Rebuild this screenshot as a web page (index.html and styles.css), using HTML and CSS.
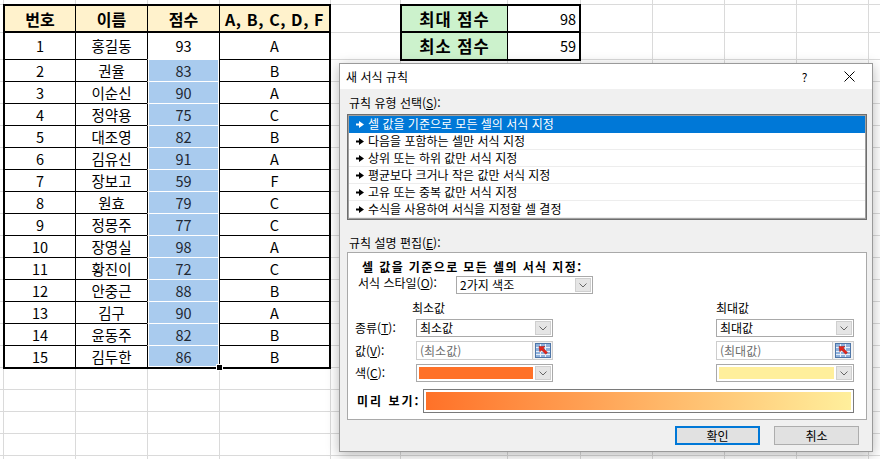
FILE: index.html
```html
<!DOCTYPE html>
<html lang="ko">
<head>
<meta charset="utf-8">
<title>새 서식 규칙</title>
<link rel="stylesheet" href="styles.css">
</head>
<body>
<div class="sheet">
  <div class="grades">
    <div class="c h">번호</div><div class="c h">이름</div><div class="c h">점수</div><div class="c h abc">A, B, C, D, F</div>
    <div class="c">1</div><div class="c">홍길동</div><div class="c sc active">93</div><div class="c">A</div>
    <div class="c">2</div><div class="c">권율</div><div class="c sc">83</div><div class="c">B</div>
    <div class="c">3</div><div class="c">이순신</div><div class="c sc">90</div><div class="c">A</div>
    <div class="c">4</div><div class="c">정약용</div><div class="c sc">75</div><div class="c">C</div>
    <div class="c">5</div><div class="c">대조영</div><div class="c sc">82</div><div class="c">B</div>
    <div class="c">6</div><div class="c">김유신</div><div class="c sc">91</div><div class="c">A</div>
    <div class="c">7</div><div class="c">장보고</div><div class="c sc">59</div><div class="c">F</div>
    <div class="c">8</div><div class="c">원효</div><div class="c sc">79</div><div class="c">C</div>
    <div class="c">9</div><div class="c">정몽주</div><div class="c sc">77</div><div class="c">C</div>
    <div class="c">10</div><div class="c">장영실</div><div class="c sc">98</div><div class="c">A</div>
    <div class="c">11</div><div class="c">황진이</div><div class="c sc">72</div><div class="c">C</div>
    <div class="c">12</div><div class="c">안중근</div><div class="c sc">88</div><div class="c">B</div>
    <div class="c">13</div><div class="c">김구</div><div class="c sc">90</div><div class="c">A</div>
    <div class="c">14</div><div class="c">윤동주</div><div class="c sc">82</div><div class="c">B</div>
    <div class="c">15</div><div class="c">김두한</div><div class="c sc end">86<span class="handle"></span></div><div class="c">B</div>
  </div>

  <div class="summary">
    <div class="s-label top">최대 점수</div><div class="s-val top">98</div>
    <div class="s-label">최소 점수</div><div class="s-val">59</div>
  </div>

  <div class="dialog">
    <div class="titlebar">
      <span class="title">새 서식 규칙</span>
      <span class="tb-btn">?</span>
      <span class="tb-btn"><svg width="11" height="11" viewBox="0 0 11 11"><path d="M0.5 0.5L10.5 10.5M10.5 0.5L0.5 10.5" stroke="#000" stroke-width="1"/></svg></span>
    </div>
    <div class="dlg-body">
      <div class="lbl l1">규칙 유형 선택(<u>S</u>):</div>
      <ul class="rules">
        <li class="sel"><svg class="tri" width="8" height="7" viewBox="0 0 8 7"><path d="M0 2.5H3V0L8 3.5L3 7V4.5H0Z" fill="currentColor"/></svg>셀 값을 기준으로 모든 셀의 서식 지정</li>
        <li><svg class="tri" width="8" height="7" viewBox="0 0 8 7"><path d="M0 2.5H3V0L8 3.5L3 7V4.5H0Z" fill="currentColor"/></svg>다음을 포함하는 셀만 서식 지정</li>
        <li><svg class="tri" width="8" height="7" viewBox="0 0 8 7"><path d="M0 2.5H3V0L8 3.5L3 7V4.5H0Z" fill="currentColor"/></svg>상위 또는 하위 값만 서식 지정</li>
        <li><svg class="tri" width="8" height="7" viewBox="0 0 8 7"><path d="M0 2.5H3V0L8 3.5L3 7V4.5H0Z" fill="currentColor"/></svg>평균보다 크거나 작은 값만 서식 지정</li>
        <li><svg class="tri" width="8" height="7" viewBox="0 0 8 7"><path d="M0 2.5H3V0L8 3.5L3 7V4.5H0Z" fill="currentColor"/></svg>고유 또는 중복 값만 서식 지정</li>
        <li><svg class="tri" width="8" height="7" viewBox="0 0 8 7"><path d="M0 2.5H3V0L8 3.5L3 7V4.5H0Z" fill="currentColor"/></svg>수식을 사용하여 서식을 지정할 셀 결정</li>
      </ul>
      <div class="lbl l2">규칙 설명 편집(<u>E</u>):</div>
      <div class="edit">
        <div class="edit-title">셀 값을 기준으로 모든 셀의 서식 지정:</div>
        <div class="style-row">
          <span class="style-lbl">서식 스타일(<u>O</u>):</span>
          <div class="combo style-combo"><span class="combo-text">2가지 색조</span><span class="arrow"><svg width="8" height="5" viewBox="0 0 8 5"><path d="M0.5 0.5L4 4L7.5 0.5" stroke="#666" fill="none"/></svg></span></div>
        </div>
        <div class="params">
          <span></span><span class="col-h min-h">최소값</span><span></span><span class="col-h">최대값</span>

          <span class="p-lbl">종류(<u>T</u>):</span>
          <div class="combo"><span class="combo-text">최소값</span><span class="arrow"><svg width="8" height="5" viewBox="0 0 8 5"><path d="M0.5 0.5L4 4L7.5 0.5" stroke="#666" fill="none"/></svg></span></div>
          <span></span>
          <div class="combo"><span class="combo-text">최대값</span><span class="arrow"><svg width="8" height="5" viewBox="0 0 8 5"><path d="M0.5 0.5L4 4L7.5 0.5" stroke="#666" fill="none"/></svg></span></div>

          <span class="p-lbl">값(<u>V</u>):</span>
          <div class="valbox"><span class="valinput">(최소값)</span><span class="pick"><svg width="16" height="15" viewBox="0 0 16 15"><rect x="0.5" y="0.5" width="15" height="14" fill="#8fb1dc" stroke="#4f76a8"/><path d="M1 4.5H15M1 8.5H15M1 11.5H15M5.5 1V14M10.5 1V14" stroke="#e8f0fa" stroke-width="1"/><path d="M4 3.5L10 3.5L8.3 5.2L12.5 9.4L10.7 11.2L6.5 7L4.8 8.7Z" fill="#e2231a" stroke="#a5140e" stroke-width="0.5"/></svg></span></div>
          <span></span>
          <div class="valbox"><span class="valinput">(최대값)</span><span class="pick"><svg width="16" height="15" viewBox="0 0 16 15"><rect x="0.5" y="0.5" width="15" height="14" fill="#8fb1dc" stroke="#4f76a8"/><path d="M1 4.5H15M1 8.5H15M1 11.5H15M5.5 1V14M10.5 1V14" stroke="#e8f0fa" stroke-width="1"/><path d="M4 3.5L10 3.5L8.3 5.2L12.5 9.4L10.7 11.2L6.5 7L4.8 8.7Z" fill="#e2231a" stroke="#a5140e" stroke-width="0.5"/></svg></span></div>

          <span class="p-lbl">색(<u>C</u>):</span>
          <div class="combo"><span class="swatch orange"></span><span class="arrow"><svg width="8" height="5" viewBox="0 0 8 5"><path d="M0.5 0.5L4 4L7.5 0.5" stroke="#666" fill="none"/></svg></span></div>
          <span></span>
          <div class="combo"><span class="swatch yellow"></span><span class="arrow"><svg width="8" height="5" viewBox="0 0 8 5"><path d="M0.5 0.5L4 4L7.5 0.5" stroke="#666" fill="none"/></svg></span></div>
        </div>
        <div class="preview-row">
          <span class="pv-lbl">미리 보기:</span>
          <div class="pv-box"><div class="pv-grad"></div></div>
        </div>
      </div>
      <div class="btns">
        <button class="btn ok">확인</button>
        <button class="btn">취소</button>
      </div>
    </div>
  </div>
</div>
</body>
</html>
```
FILE: styles.css
```css
* { box-sizing: border-box; }
html, body { margin: 0; padding: 0; }
body {
  font-family: "Noto Sans CJK KR", "Noto Sans", sans-serif;
  color: #000;
  background: #fff;
}

.sheet {
  --g: #dadada;
  position: relative;
  width: 880px;
  height: 459px;
  overflow: hidden;
  display: flex;
  align-items: flex-start;
  padding: 4px 0 0 3px;
  background:
    linear-gradient(var(--g), var(--g)) 3px 0 / 1px 100% no-repeat,
    linear-gradient(var(--g), var(--g)) 75px 0 / 1px 100% no-repeat,
    linear-gradient(var(--g), var(--g)) 147px 0 / 1px 100% no-repeat,
    linear-gradient(var(--g), var(--g)) 219px 0 / 1px 100% no-repeat,
    linear-gradient(var(--g), var(--g)) 330px 0 / 1px 100% no-repeat,
    linear-gradient(var(--g), var(--g)) 400px 0 / 1px 100% no-repeat,
    linear-gradient(var(--g), var(--g)) 507px 0 / 1px 100% no-repeat,
    linear-gradient(var(--g), var(--g)) 580px 0 / 1px 100% no-repeat,
    linear-gradient(var(--g), var(--g)) 652px 0 / 1px 100% no-repeat,
    linear-gradient(var(--g), var(--g)) 724px 0 / 1px 100% no-repeat,
    linear-gradient(var(--g), var(--g)) 796px 0 / 1px 100% no-repeat,
    linear-gradient(var(--g), var(--g)) 868px 0 / 1px 100% no-repeat,
    linear-gradient(var(--g), var(--g)) 0 4px / 100% 1px no-repeat,
    linear-gradient(var(--g), var(--g)) 0 32px / 100% 1px no-repeat,
    linear-gradient(var(--g), var(--g)) 0 59px / 100% 1px no-repeat,
    repeating-linear-gradient(to bottom, var(--g) 0 1px, transparent 1px 22px) 0 81px / 100% 400px no-repeat,
    #fff;
}

/* grade table */
.grades {
  display: grid;
  grid-template-columns: 70px 72px 72px 110px;
  grid-template-rows: 27px 27px repeat(13, 22px) 21px;
  border: 2px solid #000;
  background: #fff;
  font-size: 14.5px;
}
.c {
  display: flex;
  align-items: center;
  justify-content: center;
  padding-top: 1px;
  border-left: 1px solid #000;
  border-bottom: 1px solid #000;
  line-height: 1;
  white-space: nowrap;
}
.grades > .c:nth-child(4n+1) { border-left: 0; }
.grades > .c:nth-last-child(-n+4) { border-bottom: 0; }
.h {
  background: #fff2cc;
  font-weight: 700;
  font-size: 16px;
  border-bottom-width: 2px;
}
.abc { letter-spacing: 0.6px; }

.sc {
  background: #a9cbee;
  color: #1f2833;
  border-bottom-color: #fff;
  box-shadow: inset 1px 0 #fff, inset -1px 0 #fff;
}
.sc.active { background: #fff; color: #000; }
.sc.end {
  position: relative;
  box-shadow: inset 1px 0 #fff, inset -1px 0 #fff, inset 0 -1px #fff;
}
.handle {
  position: absolute;
  right: -4px;
  bottom: -4px;
  width: 7px;
  height: 7px;
  background: #000;
  border: 1px solid #fff;
}

/* summary box */
.summary {
  display: grid;
  grid-template-columns: 105px 72px;
  grid-template-rows: 27px 26px;
  border: 2px solid #000;
  margin-left: 69px;
  background: #fff;
}
.s-label {
  display: flex;
  align-items: center;
  justify-content: center;
  padding-top: 1px;
  background: #ccf2cc;
  font-weight: 700;
  font-size: 16.5px;
  letter-spacing: 1px;
  line-height: 1;
}
.s-val {
  display: flex;
  align-items: center;
  justify-content: flex-end;
  padding: 1px 3px 0 0;
  border-left: 1px solid #000;
  font-size: 14.5px;
  line-height: 1;
}
.top { border-bottom: 2px solid #000; }

/* dialog */
.dialog {
  position: absolute;
  left: 339px;
  top: 63px;
  width: 534px;
  border: 1px solid #9a9a9a;
  background: #f0f0f0;
  box-shadow: 0 3px 12px rgba(0, 0, 0, 0.28);
  font-size: 12px;
  line-height: 16px;
}
.titlebar {
  display: flex;
  align-items: center;
  height: 25px;
  background: #fff;
}
.title { flex: 1; padding-left: 6px; }
.tb-btn {
  width: 45px;
  height: 25px;
  display: flex;
  align-items: center;
  justify-content: center;
  font-size: 12px;
}
.dlg-body {
  display: flex;
  flex-direction: column;
  padding: 0 5px 6px 7px;
}
.lbl { padding-left: 2px; height: 16px; }
.l1 { margin-top: 6px; }
.l2 { margin-top: 15px; }
u { text-decoration-thickness: 1px; text-underline-offset: 1px; }

.rules {
  list-style: none;
  margin: 3px 0 0;
  padding: 1px;
  width: 520px;
  height: 106px;
  border: 1px solid #6e6e6e;
  background: #fff;
  box-shadow: inset 0 0 0 1px #a0a0a0;
}
.rules li {
  display: flex;
  align-items: center;
  height: 17px;
  padding-left: 7px;
  border-bottom: 1px solid #ededed;
  white-space: nowrap;
}
.rules li.sel {
  background: #0078d7;
  color: #fff;
  border-bottom-color: #0078d7;
}
.tri { margin-right: 4px; flex: none; }

.edit {
  margin-top: 1px;
  width: 520px;
  height: 168px;
  border: 1px solid #a9a9a9;
  background: #fff;
  padding: 6px 12px 6px 7px;
  display: flex;
  flex-direction: column;
}
.edit-title {
  margin-left: 7px;
  height: 16px;
  font-weight: 700;
  letter-spacing: 1.4px;
  white-space: nowrap;
}
.style-row {
  display: flex;
  align-items: flex-start;
  margin-top: 1px;
}
.style-lbl {
  width: 98px;
  margin-left: 3px;
  line-height: 14px;
  white-space: nowrap;
}
.style-combo { width: 137px; }

.combo {
  display: flex;
  align-items: center;
  height: 18px;
  border: 1px solid #a9a9a9;
  background: #fff;
}
.combo-text {
  flex: 1;
  padding-left: 3px;
  line-height: 14px;
  white-space: nowrap;
}
.arrow {
  flex: none;
  width: 16px;
  height: 14px;
  margin: 1px;
  background: #e5e5e5;
  border: 1px solid #cfcfcf;
  display: flex;
  align-items: center;
  justify-content: center;
}
.swatch {
  flex: 1;
  align-self: stretch;
  margin: 2px 1px 2px 2px;
}
.orange { background: #ff7128; }
.yellow { background: #ffef9c; }

.params {
  display: grid;
  grid-template-columns: 61px 137px 163px 138px;
  grid-template-rows: 15px 18px 19px 18px;
  row-gap: 4px;
  margin-top: 6px;
}
.col-h { line-height: 15px; white-space: nowrap; }
.min-h { margin-left: -4px; }
.p-lbl {
  display: flex;
  align-items: center;
  white-space: nowrap;
}
.valbox { display: flex; height: 19px; }
.valinput {
  width: 117px;
  height: 19px;
  border: 1px solid #cdcdcd;
  background: #fff;
  color: #6d6d6d;
  padding-left: 3px;
  display: flex;
  align-items: center;
  white-space: nowrap;
}
.pick {
  flex: 1;
  height: 19px;
  border: 1px solid #cdcdcd;
  border-left: 0;
  background: #f3f3f3;
  display: flex;
  align-items: center;
  justify-content: center;
}

.preview-row {
  display: flex;
  align-items: center;
  margin-top: 7px;
  height: 24px;
}
.pv-lbl {
  width: 66px;
  margin-left: 2px;
  font-weight: 700;
  letter-spacing: 2px;
  white-space: nowrap;
}
.pv-box {
  width: 431px;
  height: 24px;
  border: 1px solid #7a7a7a;
  padding: 2px;
  background: #fff;
}
.pv-grad {
  width: 100%;
  height: 100%;
  background: linear-gradient(to right, #ff7128, #ffef9c);
}

.btns {
  display: flex;
  justify-content: flex-end;
  gap: 14px;
  margin-top: 6px;
  padding-right: 8px;
}
.btn {
  width: 85px;
  height: 19px;
  padding: 0;
  font-family: "Noto Sans CJK KR", "Noto Sans", sans-serif;
  font-size: 12px;
  line-height: 15px;
  color: #000;
  background: #e1e1e1;
  border: 1px solid #adadad;
}
.btn.ok { border: 2px solid #0078d7; }
```
